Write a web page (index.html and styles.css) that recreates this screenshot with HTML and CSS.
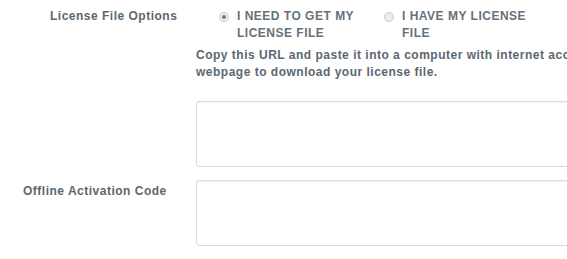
FILE: index.html
```html
<!DOCTYPE html>
<html lang="en">
<head>
    <meta charset="UTF-8">
    <meta name="viewport" content="width=device-width, initial-scale=1.0">
    <title>License Activation</title>
    <link rel="stylesheet" href="styles.css">
</head>
<body>

    <form class="license-form">
        <div class="form-row">
            <div class="form-label label-options">License File Options</div>
            <div class="form-field">
                <div class="radio-group">
                    <label class="radio-option">
                        <span class="radio checked"></span>
                        <span class="radio-text">I need to get my license file</span>
                    </label>
                    <label class="radio-option">
                        <span class="radio"></span>
                        <span class="radio-text">I have my license file</span>
                    </label>
                </div>
                <p class="help-text">Copy this URL and paste it into a computer with internet access. Open the webpage to download your license file.</p>
                <textarea class="text-box"></textarea>
            </div>
        </div>

        <div class="form-row">
            <div class="form-label label-code">Offline Activation Code</div>
            <div class="form-field">
                <textarea class="text-box"></textarea>
            </div>
        </div>
    </form>

</body>
</html>
```

FILE: styles.css
```css
body {
  margin: 0;
  background: #fff;
  font-family: "Liberation Sans", Arial, sans-serif;
  font-size: 12px;
  font-weight: bold;
  line-height: 17px;
  color: #5b6770;
  letter-spacing: 0.5px;
  overflow: hidden;
}

.license-form {
  padding-top: 8px;
  width: 680px;
}

.form-row {
  display: grid;
  grid-template-columns: 196px 1fr;
  margin-bottom: 13px;
}

.label-options {
  padding-left: 50px;
}

.label-code {
  padding-left: 23px;
  padding-top: 3px;
}

.radio-group {
  display: flex;
  padding-left: 23px;
}

.radio-option {
  display: flex;
  width: 165px;
  text-transform: uppercase;
  color: #66717a;
}

.radio {
  flex: 0 0 auto;
  width: 8px;
  height: 8px;
  margin: 4px 8px 0 0;
  border: 1px solid #c8c8c8;
  border-radius: 50%;
  background: #eee;
  position: relative;
}

.radio.checked::after {
  content: "";
  position: absolute;
  left: 2px;
  top: 2px;
  width: 4px;
  height: 4px;
  border-radius: 50%;
  background: #777;
}

.radio-text {
  width: 126px;
}

.help-text {
  margin: 5px 0 20px;
}

.text-box {
  display: block;
  box-sizing: border-box;
  width: 440px;
  height: 66px;
  margin: 0;
  border: 1px solid #dcdcdc;
  border-radius: 3px;
  box-shadow: inset 0 1px 1px rgba(0, 0, 0, 0.06);
  resize: none;
  background: #fff;
}
```
